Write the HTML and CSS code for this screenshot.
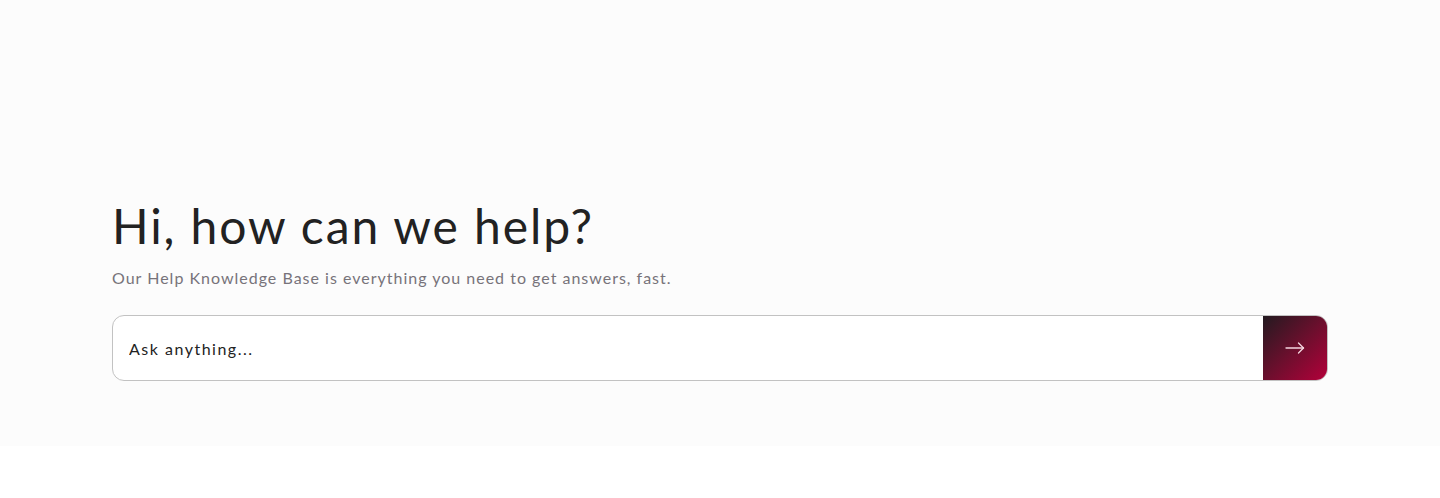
FILE: index.html
```html
<!DOCTYPE html>
<html lang="en">
<head>
<meta charset="utf-8">
<title>Help</title>
<link rel="stylesheet" href="styles.css">
</head>
<body>
<section class="hero">
  <div class="inner">
    <h1 class="title">Hi, how can we help?</h1>
    <p class="subtitle">Our Help Knowledge Base is everything you need to get answers, fast.</p>
    <form class="search">
      <input class="search-input" type="text" placeholder="Ask anything...">
      <button class="search-btn" type="button" aria-label="Search">
        <svg width="20" height="12" viewBox="0 0 20 12" fill="none" stroke="#f4d6df" stroke-width="1.3" stroke-linecap="round" stroke-linejoin="round">
          <path d="M1 6H18.5"/>
          <path d="M13.5 1L18.5 6L13.5 11"/>
        </svg>
      </button>
    </form>
  </div>
</section>
</body>
</html>
```
FILE: styles.css
```css
* { box-sizing: border-box; }
html, body { margin: 0; padding: 0; background: #ffffff; }
body { font-family: Lato, "Open Sans", sans-serif; }
.hero {
  background: #fcfcfc;
  height: 446px;
  padding: 196px 112px 0;
}
.inner { display: flex; flex-direction: column; }
.title {
  margin: 0;
  font-size: 48px;
  font-weight: 400;
  line-height: 60px;
  letter-spacing: 1.9px;
  color: #222222;
}
.subtitle {
  margin: 10px 0 0;
  font-size: 16px;
  line-height: 24px;
  letter-spacing: 1px;
  color: #77737a;
}
.search {
  margin-top: 25px;
  display: flex;
  height: 66px;
  border: 1px solid #c2c2c2;
  border-radius: 12px;
  background: #ffffff;
  overflow: hidden;
}
.search-input {
  flex: 1;
  border: 0;
  outline: none;
  background: transparent;
  padding: 0 16px;
  font-family: Lato, "Open Sans", sans-serif;
  font-size: 16px;
  letter-spacing: 1.5px;
  color: #222222;
}
.search-input::placeholder { color: #222222; opacity: 1; }
.search-btn {
  width: 64px;
  border: 0;
  padding: 0;
  display: flex;
  align-items: center;
  justify-content: center;
  background: linear-gradient(135deg, #231a20 0%, #6b0f2d 50%, #b3003a 100%);
  cursor: pointer;
}
```
